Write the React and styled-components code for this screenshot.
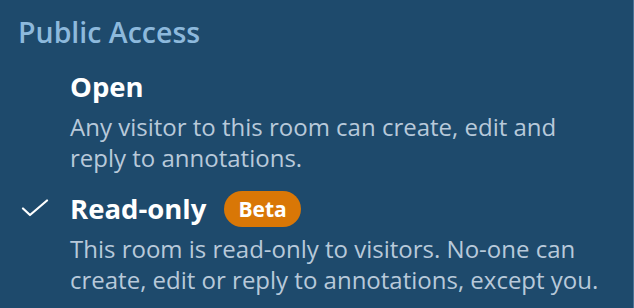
import React from "react";
import styled, { createGlobalStyle } from "styled-components";

const GlobalStyle = createGlobalStyle`
  html, body {
    margin: 0;
    padding: 0;
    background: #1e4a6c;
  }
  body {
    font-family: "Open Sans", "Noto Sans", sans-serif;
  }
`;

const options = [
  {
    id: "open",
    title: "Open",
    description: "Any visitor to this room can create, edit and reply to annotations.",
    selected: false,
  },
  {
    id: "read-only",
    title: "Read-only",
    badge: "Beta",
    description:
      "This room is read-only to visitors. No-one can create, edit or reply to annotations, except you.",
    selected: true,
  },
];

export default function App() {
  return (
    <>
      <GlobalStyle />
      <Panel>
        <Heading>Public Access</Heading>
        <OptionList>
          {options.map((option) => (
            <Option key={option.id}>
              <CheckCell>{option.selected && <CheckMark />}</CheckCell>
              <div>
                <OptionTitle>
                  {option.title}
                  {option.badge && <Badge>{option.badge}</Badge>}
                </OptionTitle>
                <Description>{option.description}</Description>
              </div>
            </Option>
          ))}
        </OptionList>
      </Panel>
    </>
  );
}

const CheckMark = () => (
  <svg width="28" height="18" viewBox="0 0 28 18" fill="none">
    <path d="M2 9.5 L9 16 L26 1.5" stroke="#ffffff" strokeWidth="2.2" strokeLinecap="round" strokeLinejoin="round" />
  </svg>
);

const Panel = styled.div`
  box-sizing: border-box;
  width: 634px;
  height: 308px;
  padding: 13px 0 0 18px;
  background: #1e4a6c;
  border-right: 1px solid #4a7395;
  overflow: hidden;
`;

const Heading = styled.h3`
  margin: 0;
  font-size: 28.5px;
  line-height: 38px;
  font-weight: 600;
  color: #8db9dc;
`;

const OptionList = styled.div`
  display: flex;
  flex-direction: column;
  gap: 18px;
  margin-top: 18px;
`;

const Option = styled.div`
  display: grid;
  grid-template-columns: 52px 1fr;
`;

const CheckCell = styled.div`
  display: flex;
  justify-content: flex-start;
  padding-top: 8px;
  padding-left: 3px;
`;

const OptionTitle = styled.div`
  display: flex;
  align-items: center;
  gap: 18px;
  font-size: 27.5px;
  line-height: 36px;
  font-weight: 700;
  color: #ffffff;
`;

const Badge = styled.span`
  display: inline-flex;
  align-items: center;
  height: 36px;
  padding: 0 14px;
  border-radius: 18px;
  background: #d97706;
  color: #ffffff;
  font-size: 21px;
  font-weight: 700;
`;

const Description = styled.p`
  margin: 6px 0 0;
  max-width: 540px;
  font-size: 24px;
  line-height: 31px;
  color: #b8c9da;
`;
